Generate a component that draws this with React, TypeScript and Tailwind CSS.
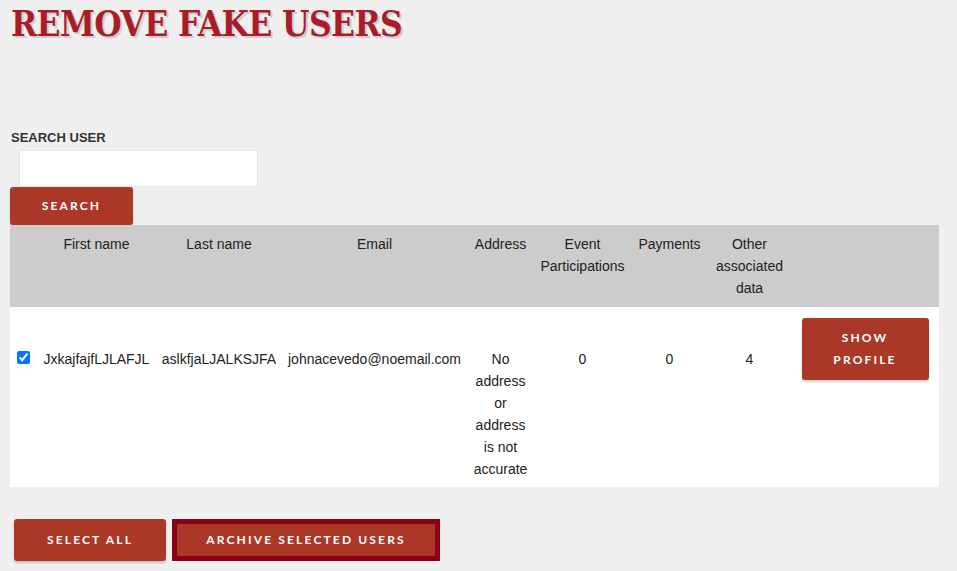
import React, { useState } from "react";

type FakeUser = {
  id: number;
  firstName: string;
  lastName: string;
  email: string;
  address: string;
  events: number;
  payments: number;
  other: number;
};

const users: FakeUser[] = [
  {
    id: 1,
    firstName: "JxkajfajfLJLAFJL",
    lastName: "aslkfjaLJALKSJFA",
    email: "johnacevedo@noemail.com",
    address: "No address or address is not accurate",
    events: 0,
    payments: 0,
    other: 4,
  },
];

const btn =
  "bg-[#ab3826] text-white font-['Lato',sans-serif] font-bold text-[12px] tracking-[0.18em] uppercase rounded-[3px] shadow-[0_2px_2px_rgba(0,0,0,0.18)]";

const RemoveFakeUsers = () => {
  const [selected, setSelected] = useState<number[]>([1]);
  const [query, setQuery] = useState("");

  const toggle = (id: number) =>
    setSelected((s) => (s.includes(id) ? s.filter((x) => x !== id) : [...s, id]));

  return (
    <div className="min-h-screen bg-[#efefef] px-[10px] font-['Liberation_Sans',Arial,sans-serif] text-[14px] text-[#222]">
      {/* Page title */}
      <h1 className="pt-[4px] pl-[1px] font-['DejaVu_Serif_Condensed','DejaVu_Serif',serif] font-bold text-[35px] leading-[39px] text-[#a91d2a] [text-shadow:2px_2px_0_#cfcfcf] tracking-[-0.6px]">
        REMOVE FAKE USERS
      </h1>

      {/* Search form */}
      <div className="mt-[87px]">
        <label className="block pl-[1px] text-[13px] font-bold leading-[16px] text-[#333]">
          SEARCH USER
        </label>
        <input
          value={query}
          onChange={(e) => setQuery(e.target.value)}
          className="ml-[9px] mt-[4px] block h-[37px] w-[239px] rounded-[2px] border border-[#e6e6e6] bg-white outline-none"
        />
        <button className={`${btn} block h-[38px] w-[123px]`}>Search</button>
      </div>

      {/* Users table */}
      <table className="w-[929px] table-fixed bg-white text-center leading-[22px]">
        <colgroup>
          <col className="w-[27px]" />
          <col className="w-[119px]" />
          <col className="w-[126px]" />
          <col className="w-[185px]" />
          <col className="w-[67px]" />
          <col className="w-[97px]" />
          <col className="w-[77px]" />
          <col className="w-[83px]" />
          <col className="w-[148px]" />
        </colgroup>
        <thead className="bg-[#cccccc]">
          <tr>
            <th className="p-[8px] font-normal align-top"></th>
            <th className="px-[4px] py-[8px] font-normal align-top">First name</th>
            <th className="px-[4px] py-[8px] font-normal align-top">Last name</th>
            <th className="px-[4px] py-[8px] font-normal align-top">Email</th>
            <th className="px-[4px] py-[8px] font-normal align-top">Address</th>
            <th className="px-[4px] py-[8px] font-normal align-top">Event Participations</th>
            <th className="px-[4px] py-[8px] font-normal align-top">Payments</th>
            <th className="px-[4px] py-[8px] font-normal align-top">Other associated data</th>
            <th className="px-[4px] py-[8px] font-normal align-top"></th>
          </tr>
        </thead>
        <tbody>
          {users.map((u) => (
            <tr key={u.id}>
              <td className="pl-[7px] py-[8px] align-baseline text-left">
                <input
                  type="checkbox"
                  checked={selected.includes(u.id)}
                  onChange={() => toggle(u.id)}
                  className="h-[13px] w-[13px] accent-[#0075ff]"
                />
              </td>
              <td className="px-[2px] py-[8px] align-baseline">{u.firstName}</td>
              <td className="px-[2px] py-[8px] align-baseline">{u.lastName}</td>
              <td className="px-[2px] py-[8px] align-baseline">{u.email}</td>
              <td className="px-[6px] pt-[6px] pb-[7px] align-baseline">{u.address}</td>
              <td className="px-[4px] py-[8px] align-baseline">{u.events}</td>
              <td className="px-[4px] py-[8px] align-baseline">{u.payments}</td>
              <td className="px-[4px] py-[8px] align-baseline">{u.other}</td>
              <td className="px-[10px] pt-[11px] pb-[8px] align-baseline">
                <button className={`${btn} inline-block w-[127px] px-[12px] pt-[9px] pb-[9px] leading-[22px]`}>
                  Show Profile
                </button>
              </td>
            </tr>
          ))}
        </tbody>
      </table>

      {/* Bulk actions */}
      <div className="mt-[32px] flex items-center gap-[6px] pl-[4px]">
        <button className={`${btn} h-[42px] w-[152px]`}>Select All</button>
        <button className={`${btn} h-[42px] w-[268px] rounded-none border-[5px] border-[#8a0016] shadow-none`}>
          Archive Selected Users
        </button>
      </div>
    </div>
  );
};

export default function App() {
  return <RemoveFakeUsers />;
}
